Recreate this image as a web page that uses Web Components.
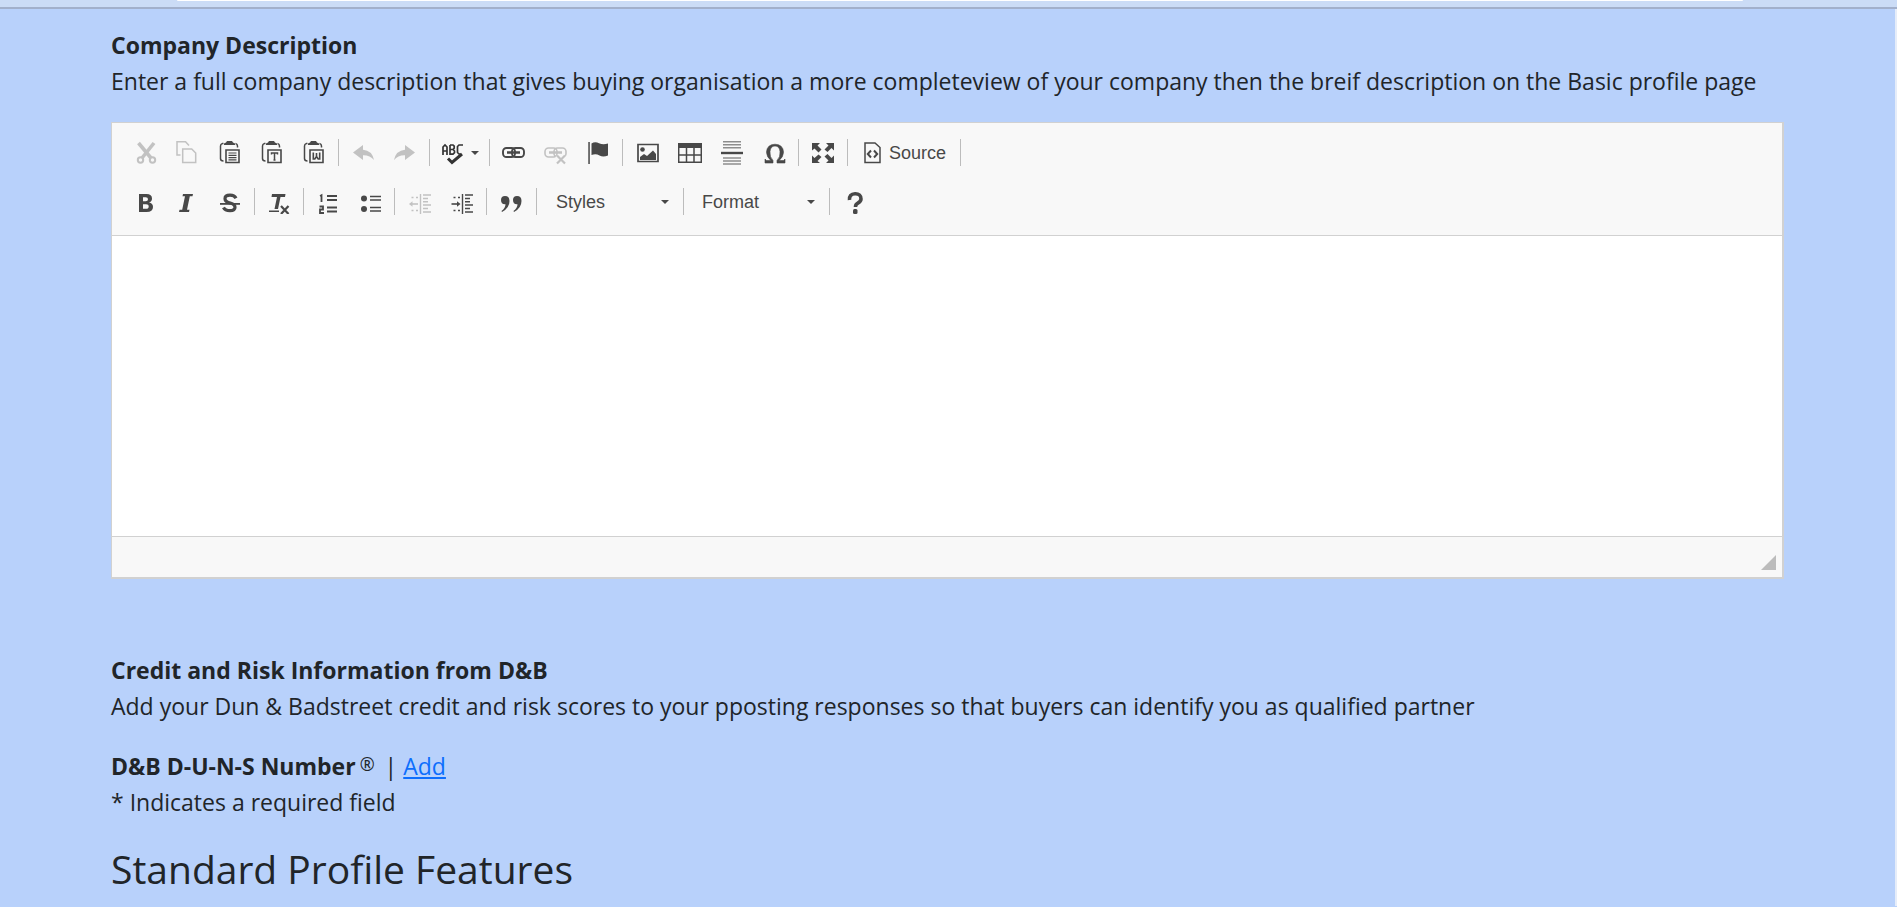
<!DOCTYPE html>
<html lang="en">
<head>
<meta charset="utf-8">
<title>Company profile</title>
<style>
html,body{margin:0;min-height:100%;background:#b8d1fb}
body{font-family:"Open Sans","Noto Sans",sans-serif;font-size:23px;line-height:36px;color:#212529}
</style>
</head>
<body>
<profile-page></profile-page>
<script>
const define=(name,html,setup)=>customElements.define(name,class extends HTMLElement{
  constructor(){
    super();
    const t=document.createElement('template');
    t.innerHTML=html;
    this.attachShadow({mode:'open'}).append(t.content.cloneNode(true));
  }
  connectedCallback(){ if(setup&&!this.ready){this.ready=true;setup(this,this.shadowRoot);} }
});

const clip='<path d="M5.500 2.500H4.500Q2.500 3 2.500 5V17.500Q2.500 20 5.500 20M17.500 2.500Q19.500 3 19.500 5V6.500" fill="none" stroke="#484848" stroke-width="1.500"/><path d="M6 4V2.500L8 1.500 9 0h5l1 1.500 2 1V4z"/><path d="M8 9h13v12.500H8z" fill="none" stroke="#484848" stroke-width="1.600"/>';
const indentLines='<path d="M12.500 4v20" stroke-width="1.400"/><path d="M15 5h8M15 8.500h5M15 15h8M15 18.500h5M15 22h8M15 11.700h5" stroke-width="1.600"/><path d="M3.500 7.500h2M8 7.500h2M3.500 20.500h2M8 20.500h2" stroke-width="1.600"/>';
const chain='<rect x="1" y="7" width="12" height="9" rx="3.500"/><rect x="10" y="7" width="12" height="9" rx="3.500"/><path d="M5 11.500h13" stroke-width="2.500"/>';
const icons={
  cut:'<g fill="none" stroke="#484848"><path d="M4.500 2 17 17" stroke-width="3.600"/><path d="M20 2 8 17" stroke-width="3.600"/><circle cx="6.500" cy="19" r="2.700" stroke-width="2"/><circle cx="18.500" cy="19" r="2.700" stroke-width="2"/></g>',
  copy:'<g fill="none" stroke="#484848" stroke-width="1.500"><path d="M4.500 14H1V.7H9.500L13 4.500"/><path d="M6.700 8h9l4 4v9.500h-13z"/></g>',
  paste:clip+'<path d="M10.500 12h8M10.500 14.300h8M10.500 16.600h8M10.500 18.900h8" stroke="#484848" stroke-width="1.200"/>',
  pasteText:clip+'<path d="M11.500 13.500V12h6v1.500M14.500 12v7M13.500 19h2" fill="none" stroke="#484848" stroke-width="1.500"/>',
  pasteWord:clip+'<path d="M11.300 11.500v6.500h1.500l1.700-2.500 1.700 2.500h1.500v-6.500M14.500 12v4" fill="none" stroke="#484848" stroke-width="1.600"/>',
  undo:'<path d="M2 11.500 12 4v4.800Q21 9.500 23 19 19 14 12 14.200V19z"/>',
  redo:'<path d="M22 11.500 12 4v4.800Q3 9.500 1 19 5 14 12 14.200V19z"/>',
  spell:'<g fill="none" stroke="#333" stroke-width="1.700"><path d="M1 14V6l2-2 2 2v8M1 10h4M8 4v9.200h3l1.500-1.500V10L11 8.500H8M8 4h3l1.200 1.200v2L11 8.500M21 4h-4l-1.500 1.500v6L17 13h1.500"/></g><path d="M6 17.500l4 4L20 13" fill="none" stroke="#333" stroke-width="3"/>',
  link:'<g fill="none" stroke="#484848" stroke-width="1.900">'+chain+'</g>',
  unlink:'<g fill="none" stroke="#484848" stroke-width="1.600">'+chain+'<path d="M13 14.500l8 8M21 14.500l-8 8" stroke="#f8f8f8" stroke-width="5"/><path d="M13 14.500l8 8M21 14.500l-8 8" stroke-width="2.200"/></g>',
  flag:'<path d="M2.300 1h1.500v22H2.300zM5.500 2.500Q9 .3 13 2.200T22 2.500v12Q17 16.500 13.500 14.500T5.500 14z"/>',
  image:'<path d="M2 3.500h20v17H2z" fill="none" stroke="#484848" stroke-width="1.700"/><circle cx="6.500" cy="8.500" r="2.300"/><path d="M4 19v-3l4-3 3 2 6-5.500 3 3.500v6z"/>',
  table:'<path d="M0 2h24v5H0z"/><path d="M.7 5v16.300h22.600V5M8.500 5v16M16 5v16M0 14h24" fill="none" stroke="#484848" stroke-width="1.500"/>',
  rule:'<path d="M3 .8h18M3 3.800h18M3 6.800h18M3 17h18M3 20h18M3 23h18" stroke="#8d8d8d" stroke-width="1.400"/><path d="M1 10.800h22v2.400H1z"/>',
  omega:'<path stroke="#484848" stroke-width=".600" d="M3 22v-4l1.500 1.500H9Q4.500 16 4.500 11 5 3.500 13 3.200 21 3.500 21.500 11 21.500 16 17 19.500h4.500L23 18v4h-8v-2.500Q18.500 16 18 10.500 17.500 5 13 5T8 10.500Q7.500 16 11 19.500V22z"/>',
  maximize:'<path d="M1 2h8L6.500 4.500l4 4-3 3-4-4L1 9.500zM23 2v7.500L20.500 7l-4 4-3-2.500 4-4L15 2zM1 22v-7.500L3.500 17l4-3.500 3 2.500-4 4L9 22zM23 22h-8l2.500-2.500-4-4 3-2.500 4 4 2.500-2.500z"/>',
  source:'<path d="M5 2h10l5 4.500v15H5z" fill="none" stroke="#484848" stroke-width="1.500"/><path d="M11 9.500l-3.200 3.500L11 16.500M14 9.500l3.200 3.500L14 16.500" fill="none" stroke="#484848" stroke-width="2"/>',
  bold:'<path fill-rule="evenodd" d="M5 4h7.500Q18 4 18 8.500 18 11.500 15 12.500 19 13.300 19 17 19 22 12.500 22H5zm4 3.200v4h2.700q2.300 0 2.300-2t-2.300-2zm0 7v4.600h3q2.700 0 2.700-2.300T12 14.200z"/>',
  italic:'<path d="M7 4h10l-.5 2.300h-2.700L11 19.700h2.500L13 22H3l.5-2.300h2.700L9 6.300H6.500z"/>',
  strike:'<path d="M18 8.200Q16.500 5.200 12 5.200 7 5.200 7 8.700 7 11.800 12.300 13 17 14.200 17 17.300 17 20.700 12 20.700 7 20.700 5.500 17.500" fill="none" stroke="#484848" stroke-width="3.200"/><path d="M2 13h20v1.800H2z"/>',
  clear:'<path d="M5 4h13.500l-.5 3h-4.500L11 19H7.500L10 7H4.500z"/><path d="M2 20.500h10V22H2z"/><path d="M14 16l7.500 8M21.500 16L14 24" stroke="#484848" stroke-width="2.200"/>',
  numbers:'<path d="M4 6l1.500-.8V12M3.500 16.500H7v3H4V23h4M11 6h10M11 10h10M11 17.500h10M11 21.500h10" fill="none" stroke="#484848" stroke-width="1.800"/>',
  bullets:'<circle cx="6" cy="8.500" r="3"/><circle cx="6" cy="19" r="3"/><path d="M12 6.500h11M12 10h11M12 17.500h11M12 21h11" stroke="#484848" stroke-width="1.700"/>',
  outdent:'<g fill="none" stroke="#484848">'+indentLines+'<path d="M3 14h7" stroke-width="1.600"/></g><path d="M1 14l3.500-2.800v5.600z"/>',
  indent:'<g fill="none" stroke="#484848">'+indentLines+'<path d="M1.500 14H8" stroke-width="1.600"/></g><path d="M10.500 14L7 11.200v5.600z"/>',
  quote:'<path d="M1 10a4 4 0 0 1 4-4q4.500 0 4.500 5 0 7-7.500 11l-.5-1Q5.500 18 5.500 14.200 1 14.500 1 10zM13 10a4 4 0 0 1 4-4q4.500 0 4.500 5 0 7-7.500 11l-.5-1q4-3 4-6.800Q13 14.500 13 10z"/>',
  help:'<path d="M6.500 10Q6 4 12 3.800T18 9q0 2.500-3.500 4.300-2 1-2 3.700" fill="none" stroke="#484848" stroke-width="3.600"/><rect x="10" y="19" width="4.500" height="5" rx="1.500"/>'
};
const svg=n=>'<svg width="24" height="24" viewBox="0 0 24 24" fill="#484848" aria-hidden="true">'+icons[n]+'</svg>';

define('tool-button',`<style>
:host{display:block}
button{display:flex;align-items:center;gap:5px;height:36px;margin:0;padding:0 9px;border:0;background:none;color:#484848;font:18px/24px "Liberation Sans",Arial,sans-serif}
button:disabled svg{opacity:.3}
svg{display:block;flex:none}
:host(:not([menu]):not([wide])) button{gap:0}
:host([menu]) button{padding-right:7px}
:host([wide]) button{padding-right:11px}
.arrow{display:none}
:host([menu]) .arrow{display:block}
</style><button type="button"><span id="icon"></span><slot></slot><svg class="arrow" width="8" height="4" viewBox="0 0 8 4" aria-hidden="true"><path d="M0 0h8L4 4z" fill="#484848"/></svg></button>`,
(el,root)=>{
  root.querySelector('#icon').innerHTML=svg(el.getAttribute('icon'));
  const b=root.querySelector('button');
  if(el.hasAttribute('label')) b.setAttribute('aria-label',el.getAttribute('label'));
  b.disabled=el.hasAttribute('disabled');
});

define('tool-separator',`<style>
:host{display:block;box-sizing:border-box;width:7px;height:27px;padding-left:3px}
:host([loose]){width:8px}
i{display:block;width:1px;height:27px;background:#bcbcbc}
</style><i></i>`);

define('tool-select',`<style>
:host{display:grid;width:139px;align-items:center}
select,svg{grid-area:1/1}
select{appearance:none;width:100%;height:36px;margin:0;padding:0 15px;border:0;background:none;color:#484848;font:18px/24px "Liberation Sans",Arial,sans-serif}
svg{justify-self:end;margin-right:11px;pointer-events:none}
</style><select><option></option></select><svg width="8" height="4" viewBox="0 0 8 4" aria-hidden="true"><path d="M0 0h8L4 4z" fill="#484848"/></svg>`,
(el,root)=>{
  root.querySelector('option').textContent=el.getAttribute('label');
  root.querySelector('select').setAttribute('aria-label',el.getAttribute('label'));
});

const b=(icon,label,extra='')=>`<tool-button icon="${icon}" label="${label}" ${extra}></tool-button>`;
const s='<tool-separator></tool-separator>', l='<tool-separator loose></tool-separator>';

define('rich-editor',`<style>
:host{display:block;border:1px solid #d1d1d1;border-width:1px 2px 2px 1px;background:#fff}
.tools{padding:5px 13px 9px;background:#f8f8f8;border-bottom:1px solid #d1d1d1}
.row{display:flex;align-items:center;height:49px}
textarea{display:block;box-sizing:border-box;width:100%;height:300px;margin:0;padding:30px;border:0;outline:0;resize:none;background:#fff;font:20px/32px "Liberation Sans",Arial,sans-serif}
.foot{display:flex;justify-content:flex-end;align-items:flex-end;box-sizing:border-box;height:41px;padding:0 6px 7px;background:#f8f8f8;border-top:1px solid #d1d1d1}
.foot svg{display:block}
</style>
<div class="tools" role="toolbar" aria-label="Editor toolbars">
<div class="row">${b('cut','Cut','disabled')}${b('copy','Copy','disabled')}${b('paste','Paste')}${b('pasteText','Paste as plain text')}${b('pasteWord','Paste from Word')}${s}${b('undo','Undo','disabled')}${b('redo','Redo','disabled')}${s}${b('spell','Spell check as you type','menu')}${s}${b('link','Link')}${b('unlink','Unlink','disabled')}${b('flag','Anchor')}${l}${b('image','Image')}${b('table','Table')}${b('rule','Insert horizontal line')}${b('omega','Insert special character')}${s}${b('maximize','Maximize')}${s}<tool-button icon="source" wide>Source</tool-button>${s}</div>
<div class="row">${b('bold','Bold')}${b('italic','Italic')}${b('strike','Strikethrough')}${s}${b('clear','Remove format')}${s}${b('numbers','Numbered list')}${b('bullets','Bulleted list')}${l}${b('outdent','Decrease indent','disabled')}${b('indent','Increase indent')}${l}${b('quote','Block quote')}${l}<tool-select label="Styles"></tool-select>${s}<tool-select label="Format"></tool-select>${l}${b('help','About')}</div>
</div>
<textarea aria-label="Company Description"></textarea>
<div class="foot"><svg width="15" height="15" viewBox="0 0 15 15" aria-hidden="true"><path d="M15 0v15H0z" fill="#bcbcbc"/></svg></div>`);

define('info-block',`<style>
:host{display:block;margin-bottom:24px}
</style><slot></slot>`);

define('window-edge',`<style>
:host{display:block;padding:0 154px 0 177px;height:7px;background:#cbdcf6;border-bottom:2px solid #a2b0cb}
i{display:block;height:1px;background:#fff;border-radius:0 0 2px 2px}
</style><i></i>`);

define('profile-page',`<style>
:host{display:block}
main{padding:18px 111px 12px 111px;border-right:2px solid #e6edf9}
p,h1{margin:0}
h1{font-size:39px;line-height:50px;font-weight:400}
rich-editor{margin:23px 0 73px}
sup{margin:0 4px;font-size:18px;line-height:0;font-weight:400;vertical-align:4px}
a{color:#0d6efd;text-decoration:underline}
b{font-weight:700}
</style>
<window-edge></window-edge>
<main>
<p><b>Company Description</b></p>
<p>Enter a full company description that gives buying organisation a more completeview of your company then the breif description on the Basic profile page</p>
<rich-editor></rich-editor>
<info-block><p><b>Credit and Risk Information from D&amp;B</b></p>
<p>Add your Dun &amp; Badstreet credit and risk scores to your pposting responses so that buyers can identify you as qualified partner</p></info-block>
<info-block><p><b>D&amp;B D-U-N-S Number</b><sup>®</sup> | <a href="#add">Add</a></p>
<p>* Indicates a required field</p></info-block>
<h1>Standard Profile Features</h1>
</main>`);
</script>
</body>
</html>
